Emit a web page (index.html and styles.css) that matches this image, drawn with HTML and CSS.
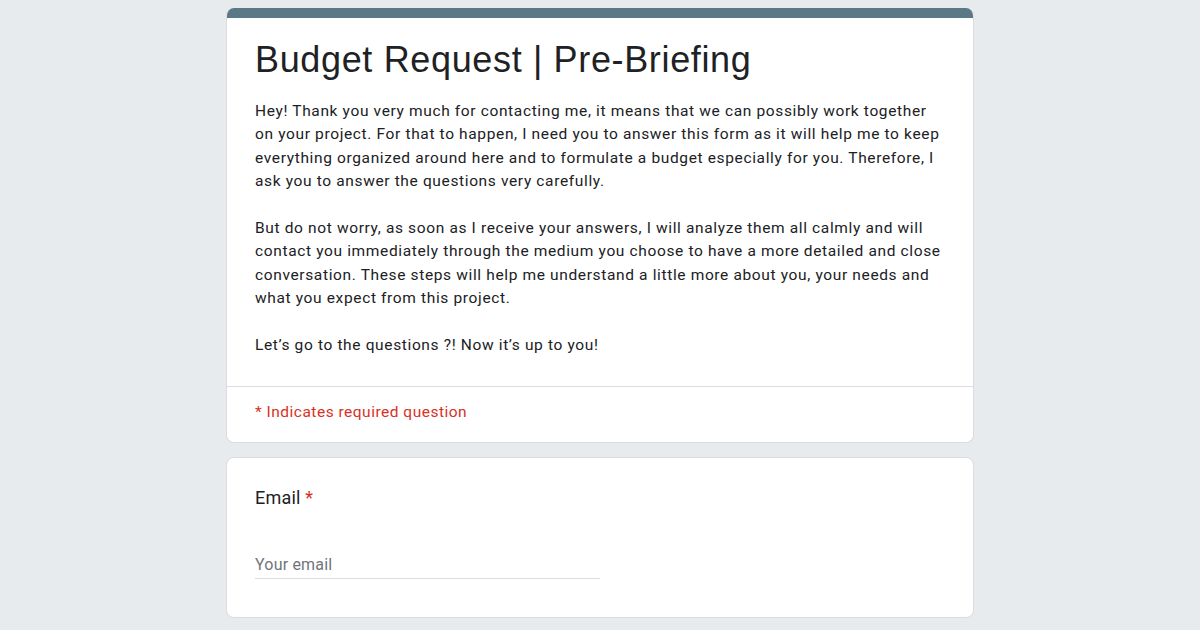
FILE: index.html
```html
<!DOCTYPE html>
<html lang="en">
<head>
<meta charset="utf-8">
<title>Budget Request | Pre-Briefing</title>
<link rel="stylesheet" href="styles.css">
</head>
<body>
<main class="form">
  <section class="card header-card">
    <div class="theme-bar"></div>
    <div class="header-body">
      <h1 class="title">Budget Request | Pre-Briefing</h1>
      <p class="desc">Hey! Thank you very much for contacting me, it means that we can possibly work together<br>on your project. For that to happen, I need you to answer this form as it will help me to keep<br>everything organized around here and to formulate a budget especially for you. Therefore, I<br>ask you to answer the questions very carefully.<br><br>But do not worry, as soon as I receive your answers, I will analyze them all calmly and will<br>contact you immediately through the medium you choose to have a more detailed and close<br>conversation. These steps will help me understand a little more about you, your needs and<br>what you expect from this project.<br><br>Let’s go to the questions ?! Now it’s up to you!</p>
    </div>
    <div class="required-note">* Indicates required question</div>
  </section>
  <section class="card question-card">
    <div class="question-label">Email <span class="star">*</span></div>
    <div class="input-line"><span class="placeholder">Your email</span></div>
  </section>
</main>
</body>
</html>
```

FILE: styles.css
```css
html, body {
  margin: 0;
  padding: 0;
}
body {
  background: #e7ebee;
  font-family: Roboto, "Liberation Sans", Arial, sans-serif;
  color: #202124;
}
.form {
  width: 748px;
  margin: 0 auto;
  padding-top: 8px;
  display: flex;
  flex-direction: column;
  gap: 14px;
}
.card {
  background: #ffffff;
  border: 1px solid #dadce0;
  border-radius: 8px;
  box-sizing: border-box;
}
.header-card {
  border-top: none;
  overflow: hidden;
}
.theme-bar {
  height: 10px;
  background: #5b7886;
  margin: 0 -1px;
}
.header-body {
  padding: 22px 28px 29px;
  border-bottom: 1px solid #dadce0;
}
.title {
  margin: 0;
  font-family: "Liberation Sans", Arial, sans-serif;
  font-size: 36px;
  line-height: 40px;
  font-weight: 400;
  letter-spacing: 0.65px;
  color: #202124;
}
.desc {
  margin: 20px 0 0;
  font-size: 15.5px;
  line-height: 23.4px;
  letter-spacing: 0.64px;
  white-space: nowrap;
  color: #202124;
}
.required-note {
  padding: 15px 28px 20px;
  font-size: 15.5px;
  line-height: 20px;
  color: #d93025;
  letter-spacing: 0.5px;
}
.question-card {
  padding: 28px 28px 38px;
}
.question-label {
  font-size: 18px;
  line-height: 24px;
  color: #202124;
  letter-spacing: 0.2px;
}
.star {
  color: #d93025;
}
.input-line {
  margin-top: 40px;
  width: 345px;
  height: 28px;
  border-bottom: 1px solid #dadce0;
  display: flex;
  align-items: center;
}
.placeholder {
  font-size: 16px;
  color: #70757a;
  letter-spacing: 0.2px;
}
```
